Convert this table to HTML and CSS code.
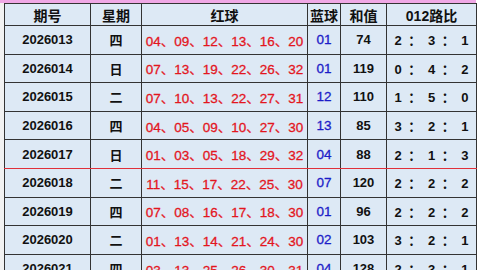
FILE: index.html
```html
<!DOCTYPE html>
<html lang="zh-CN">
<head>
    <meta charset="UTF-8">
    <title>012路比走势</title>
    <link rel="stylesheet" href="styles.css">
</head>
<body>
    <div class="wrap">
        <div class="topbar"></div>
        <table class="trend">
            <colgroup>
                <col class="c-issue">
                <col class="c-week">
                <col class="c-red">
                <col class="c-blue">
                <col class="c-sum">
                <col class="c-ratio">
            </colgroup>
            <thead>
                <tr>
                    <th>期号</th>
                    <th>星期</th>
                    <th>红球</th>
                    <th>蓝球</th>
                    <th>和值</th>
                    <th>012路比</th>
                </tr>
            </thead>
            <tbody>
                <tr>
                    <td>2026013</td><td class="week">四</td>
                    <td class="red">04、09、12、13、16、20</td>
                    <td class="blue">01</td><td>74</td>
                    <td class="ratio">2 ： 3 ： 1</td>
                </tr>
                <tr>
                    <td>2026014</td><td class="week">日</td>
                    <td class="red">07、13、19、22、26、32</td>
                    <td class="blue">01</td><td>119</td>
                    <td class="ratio">0 ： 4 ： 2</td>
                </tr>
                <tr>
                    <td>2026015</td><td class="week">二</td>
                    <td class="red">07、10、13、22、27、31</td>
                    <td class="blue">12</td><td>110</td>
                    <td class="ratio">1 ： 5 ： 0</td>
                </tr>
                <tr>
                    <td>2026016</td><td class="week">四</td>
                    <td class="red">04、05、09、10、27、30</td>
                    <td class="blue">13</td><td>85</td>
                    <td class="ratio">3 ： 2 ： 1</td>
                </tr>
                <tr class="split">
                    <td>2026017</td><td class="week">日</td>
                    <td class="red">01、03、05、18、29、32</td>
                    <td class="blue">04</td><td>88</td>
                    <td class="ratio">2 ： 1 ： 3</td>
                </tr>
                <tr>
                    <td>2026018</td><td class="week">二</td>
                    <td class="red">11、15、17、22、25、30</td>
                    <td class="blue">07</td><td>120</td>
                    <td class="ratio">2 ： 2 ： 2</td>
                </tr>
                <tr>
                    <td>2026019</td><td class="week">四</td>
                    <td class="red">07、08、16、17、18、30</td>
                    <td class="blue">01</td><td>96</td>
                    <td class="ratio">2 ： 2 ： 2</td>
                </tr>
                <tr>
                    <td>2026020</td><td class="week">二</td>
                    <td class="red">01、13、14、21、24、30</td>
                    <td class="blue">02</td><td>103</td>
                    <td class="ratio">3 ： 2 ： 1</td>
                </tr>
                <tr>
                    <td>2026021</td><td class="week">四</td>
                    <td class="red">03、13、25、26、30、31</td>
                    <td class="blue">04</td><td>128</td>
                    <td class="ratio">2 ： 3 ： 1</td>
                </tr>
            </tbody>
        </table>
    </div>
</body>
</html>
```

FILE: styles.css
```css
body {
    margin: 0;
    background-color: #ffffff;
    font-family: "Liberation Sans", "Noto Sans CJK SC", sans-serif;
}

.wrap {
    width: 476px;
    background-color: #f2f2f2;
}

.topbar {
    height: 3px;
    background-color: #f0a8e6;
}

.trend {
    margin-left: 4px;
    width: 472px;
    border-collapse: collapse;
    table-layout: fixed;
    background-color: #dde9f5;
    border: 1px solid #444;
}

.c-issue { width: 86px; }
.c-week { width: 51px; }
.c-red { width: 166px; }
.c-blue { width: 33px; }
.c-sum { width: 46px; }
.c-ratio { width: 90px; }

.trend th,
.trend td {
    border: 1px solid #333;
    text-align: center;
    padding: 0;
    white-space: nowrap;
    font-weight: bold;
    color: #111;
}

.trend th {
    height: 21px;
    font-size: 14px;
}

.trend td {
    height: 27.6px;
    font-size: 13px;
}

.trend .week {
    font-family: "Noto Sans CJK SC", sans-serif;
    font-size: 13px;
}

.trend .red {
    color: #e3161e;
    font-size: 13.5px;
    font-weight: normal;
    -webkit-text-stroke: 0.3px #e3161e;
}

.trend .blue {
    color: #1c1cc8;
    font-weight: normal;
    font-size: 13.5px;
    -webkit-text-stroke: 0.3px #1c1cc8;
}

.trend .ratio {
    font-size: 13px;
    word-spacing: 3px;
}

.trend tr.split td {
    border-bottom: 1px solid #e0303a;
}
```
